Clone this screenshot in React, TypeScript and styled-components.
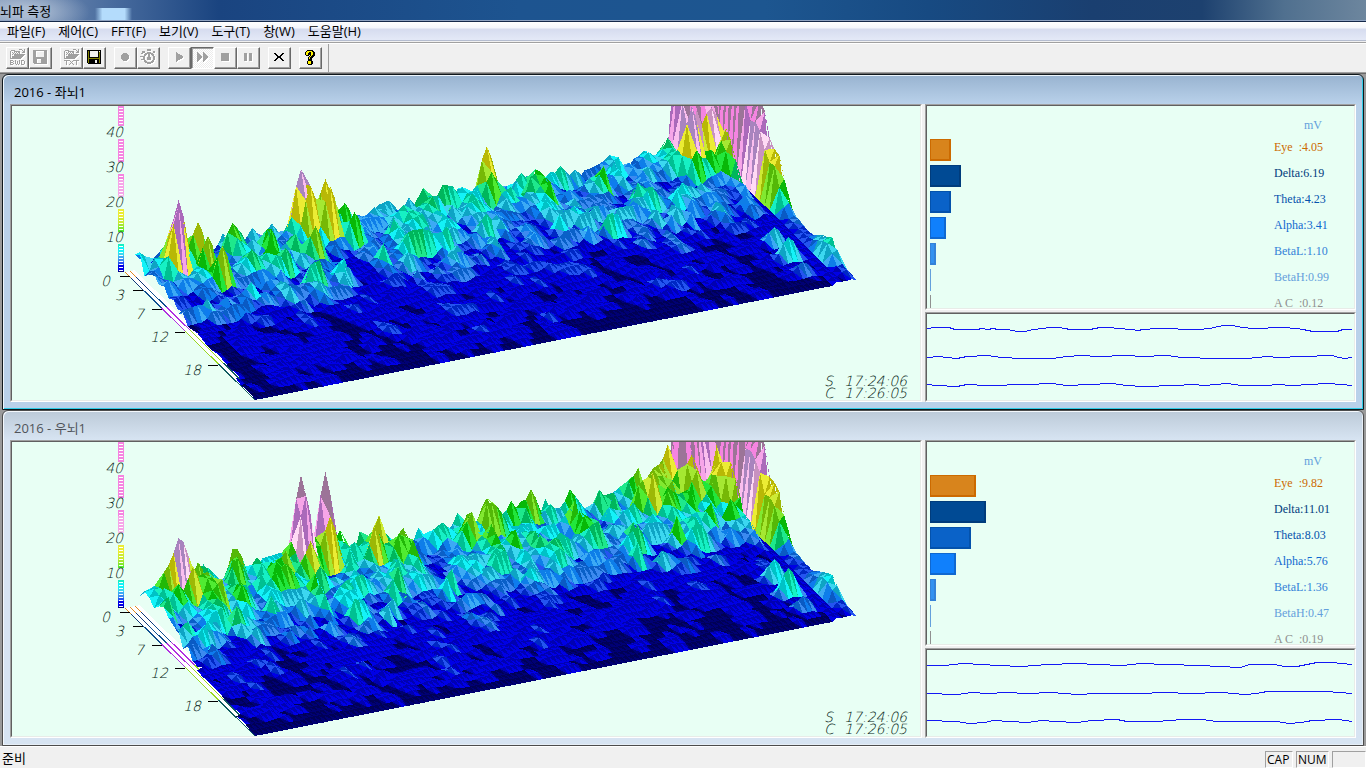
import React, { useMemo } from 'react';
import styled, { createGlobalStyle, css } from 'styled-components';

/* ---------- spectrum surface model ---------- */

type Peak = [x: number, y: number, depth: number];

interface ChannelData {
  title: string;
  active: boolean;
  seed: number;
  /* first drawn frame, by depth: [depth limit, frame] */
  start: [number, number][];
  envelope: number[];
  peaks: Peak[];
  levels: Level[];
  waves: number[][];
}

interface Level {
  name: string;
  value: string;
  width: number;
  fill: string;
  edge: string;
}

const FRAMES = 123;
const BINS = 27;
const FRAME_DX = 4.89;
const FRAME_DY = 0.966;

const floorX = (t: number, f: number) => 125 + t * FRAME_DX + 130 * f;
const floorY = (t: number, f: number) => 272 - t * FRAME_DY + 128 * f;

const lerpTable = (table: number[][], v: number) => {
  if (v <= table[0][0]) return table[0][1];
  for (let i = 1; i < table.length; i++) {
    if (v <= table[i][0]) {
      const [a, ha] = table[i - 1];
      const [b, hb] = table[i];
      return ha + ((hb - ha) * (v - a)) / (b - a);
    }
  }
  return table[table.length - 1][1];
};

const hash = (x: number, y: number, seed: number) => {
  let h = (x * 374761393 + y * 668265263 + seed * 1442695041) | 0;
  h = Math.imul(h ^ (h >>> 13), 1274126177);
  h = Math.imul(h ^ (h >>> 15), 2246822519);
  return ((h ^ (h >>> 16)) >>> 0) / 4294967296;
};

const noise = (x: number, y: number, seed: number) => {
  const ix = Math.floor(x);
  const iy = Math.floor(y);
  const s = (v: number) => v * v * (3 - 2 * v);
  const u = s(x - ix);
  const v = s(y - iy);
  const top = hash(ix, iy, seed) * (1 - u) + hash(ix + 1, iy, seed) * u;
  const low = hash(ix, iy + 1, seed) * (1 - u) + hash(ix + 1, iy + 1, seed) * u;
  return top * (1 - v) + low * v;
};

const WALL = [
  [0, 150], [0.18, 150], [0.22, 98], [0.32, 92], [0.34, 84], [0.37, 62], [0.4, 58], [0.43, 60], [0.46, 52],
  [0.49, 32], [0.53, 12], [0.57, 8], [0.6, 12], [0.65, 6], [0.68, 12], [0.71, 9],
  [0.76, 17], [0.86, 26], [0.89, 18], [0.92, 9], [0.96, 8], [1, 3],
];

const LIT = [
  [0, 0, 116], [0, 0, 230], [36, 84, 240], [60, 138, 240], [14, 124, 238], [60, 170, 245], [60, 215, 240],
  [20, 242, 248], [22, 240, 196], [30, 232, 140], [34, 230, 60], [80, 235, 50],
  [130, 232, 48], [165, 232, 50], [205, 235, 52], [235, 236, 52], [255, 218, 244],
  [250, 190, 238], [246, 165, 232], [245, 132, 224],
];
const DARK = [
  [0, 0, 86], [0, 0, 178], [0, 40, 196], [10, 96, 200], [10, 90, 196], [14, 126, 232], [14, 164, 196],
  [0, 194, 198], [0, 192, 146], [0, 182, 92], [8, 184, 8], [34, 184, 8],
  [84, 184, 8], [118, 184, 6], [156, 184, 6], [184, 184, 6], [200, 146, 192],
  [168, 132, 190], [170, 106, 186], [156, 116, 152],
];
const STEPS = [2.5, 7.4, 10.5, 13, 15, 18, 21.5, 25.5, 30, 34, 38, 42, 46, 50, 56, 63, 70, 78, 92];
const band = (h: number) => {
  let i = 0;
  while (i < STEPS.length && h > STEPS[i]) i++;
  return i;
};

function buildSurface(ch: ChannelData) {
  const h: number[][] = [];
  const env = ch.envelope.map((v, i) => [i / 10, v]);
  for (let j = 0; j <= BINS; j++) {
    const f = j / BINS;
    const row: number[] = [];
    for (let t = 0; t <= FRAMES; t++) {
      const fine = noise(t / 2, j / 1.1, ch.seed);
      const jag = hash(t, j, ch.seed + 5);
      const coarse = noise(t / 7 - j / 20, j / 4, ch.seed + 9);
      let v = lerpTable(env, f) * (0.2 + 2.3 * fine * fine + 0.15 * jag) * (0.55 + 0.85 * coarse);
      if (t < 6) v *= 0.7;
      if (t > 104 && f > 0.2) v *= 0.8;
      if (j === BINS) v = 0;
      row.push(v);
    }
    h.push(row);
  }
  ch.peaks.forEach(([x, y, f]) => {
    const j0 = Math.round(f * BINS);
    const t0 = Math.round((x - 125 - (130 * j0) / BINS) / FRAME_DX);
    const peak = floorY(t0, j0 / BINS) - y;
    for (let j = Math.max(0, j0 - 1); j <= Math.min(BINS, j0 + 1); j++) {
      for (let t = Math.max(0, t0 - 3); t <= Math.min(FRAMES, t0 + 3); t++) {
        const along = [1, 0.78, 0.38, 0.1][Math.abs(t - t0)];
        const across = j === j0 ? 1 : 0.14;
        h[j][t] = Math.max(h[j][t], peak * along * across);
      }
    }
  });
  for (let j = 0; j <= BINS; j++) {
    const f = j / BINS;
    const w = lerpTable(WALL, f);
    if (j < 4) {
      for (let t = 112; t <= 118; t++) {
        const burst = (j === 3 ? 22 : 62) + (j === 3 ? 50 : 80) * hash(t, 3 + j, ch.seed);
        h[j][t] = Math.max(h[j][t], burst);
      }
    }
    h[j][119] = f < 0.15 ? 40 : 3.5;
    h[j][120] = 2.4;
    h[j][121] = w * 0.8 * (0.88 + 0.2 * hash(j, 2, ch.seed));
    h[j][122] = w * (0.96 + 0.08 * hash(j, 1, ch.seed));
    h[j][123] = w * 0.3;
  }

  const out: { d: string; fill: string }[] = [];
  const pt = (t: number, j: number) =>
    `${floorX(t, j / BINS).toFixed(1)} ${(floorY(t, j / BINS) - h[j][t]).toFixed(1)}`;
  for (let j = 0; j < BINS; j++) {
    const groups = new Map<string, string>();
    const add = (fill: string, d: string) => groups.set(fill, (groups.get(fill) || '') + d);
    const first = (ch.start.find(([limit]) => j / BINS < limit) || [1, 0])[1];
    for (let t = FRAMES - 1; t >= first; t--) {
      const a = h[j][t];
      const b = h[j][t + 1];
      const c = h[j + 1][t + 1];
      const e = h[j + 1][t];
      const up = (c - e > -9 ? LIT : DARK)[band(Math.max(a, c, e))];
      const down = DARK[band(Math.max(a, b, c))];
      add(`rgb(${down.join(',')})`, `M${pt(t, j)}L${pt(t + 1, j)}L${pt(t + 1, j + 1)}Z`);
      add(`rgb(${up.join(',')})`, `M${pt(t, j)}L${pt(t, j + 1)}L${pt(t + 1, j + 1)}Z`);
    }
    groups.forEach((d, fill) => out.push({ d, fill }));
  }
  return out;
}

/* ---------- channel data ---------- */

const palette = [
  ['Eye  ', '#d8841c', '#cc6a00'],
  ['Delta', '#004a94', '#003c7c'],
  ['Theta', '#0a62c8', '#0452ac'],
  ['Alpha', '#1080fc', '#1068d0'],
  ['BetaL', '#3492f0', '#3482d8'],
  ['BetaH', '#64a0dc', '#64a0dc'],
  ['A C  ', '#909090', '#909090'],
];
const makeLevels = (rows: [string, number][]): Level[] =>
  rows.map(([value, width], i) => ({
    name: palette[i][0], value, width, fill: palette[i][1], edge: palette[i][2],
  }));

const channels: ChannelData[] = [
  {
    title: '2016 - 좌뇌1',
    active: true,
    seed: 17,
    start: [[0.35, 2], [0.85, 1]],
    envelope: [10, 15, 15, 12, 8.5, 5, 4.2, 3.7, 3, 2.3, 1.8],
    peaks: [
      [140, 252, 0.03], [180, 200, 0.1], [178, 206, 0.15], [199, 222, 0.12], [209, 236, 0.18], [231, 223, 0.06],
      [222, 246, 0.26], [235, 228, 0.08], [270, 238, 0.02], [302, 169, 0.04], [309, 186, 0.08], [324, 179, 0.05],
      [330, 186, 0.1], [344, 203, 0.08], [355, 212, 0.14], [314, 226, 0.22], [288, 248, 0.25], [170, 280, 0.24],
      [372, 207, 0.03], [385, 238, 0.16], [398, 211, 0.04], [424, 205, 0.02], [432, 213, 0.14], [450, 195, 0.02],
      [462, 187, 0.05], [470, 191, 0.04], [485, 146, 0.03], [491, 172, 0.08], [504, 186, 0.02], [521, 173, 0.02],
      [528, 178, 0.05], [515, 212, 0.2], [484, 214, 0.26], [550, 172, 0.04], [561, 166, 0.05], [573, 170, 0.04],
      [571, 190, 0.14], [610, 155, 0.01], [612, 160, 0.04], [630, 163, 0.03], [660, 162, 0.02], [580, 200, 0.2],
      [668, 142, 0.03], [674, 148, 0.07], [690, 106, 0.13], [696, 150, 0.19], [711, 108, 0.12], [713, 150, 0.2],
      [719, 140, 0.16], [727, 128, 0.2], [733, 140, 0.23], [740, 150, 0.27], [748, 180, 0.34], [703, 183, 0.28],
      [755, 205, 0.46], [773, 227, 0.68], [790, 237, 0.78], [805, 262, 0.9], [759, 240, 0.64],
    ],
    levels: makeLevels([['4.05', 21], ['6.19', 31], ['4.23', 21], ['3.41', 16], ['1.10', 6], ['0.99', 1], ['0.12', 1]]),
    waves: [
      [0,13,8,12,22,12,28,14,50,14,55,13,61,14,66,13,71,14,81,14,90,16,98,16,106,14,116,13,123,12,132,12,138,13,143,14,163,14,173,12,183,12,190,13,205,14,211,15,216,14,230,13,271,14,283,13,291,11,298,10,306,10,315,12,326,13,356,12,370,13,376,14,386,16,410,16,416,14,425,14],
      [0,42,12,41,20,42,30,43,40,41,60,40,75,42,95,43,125,43,140,41,155,40,170,41,200,40,215,41,240,40,255,42,290,43,320,43,340,41,352,42,375,41,405,40,412,42,418,43,425,42],
      [0,69,10,70,30,71,40,69,60,70,100,69,125,68,140,70,185,68,200,70,215,71,250,70,265,69,278,70,300,68,315,70,340,70,350,69,365,70,400,68,415,69,425,70],
    ],
  },
  {
    title: '2016 - 우뇌1',
    active: false,
    seed: 42,
    start: [[0.3, 3], [0.5, 2], [0.85, 1]],
    envelope: [15, 20, 20, 15, 9, 5, 4, 3.5, 2.8, 2.2, 1.7],
    peaks: [
      [132, 257, 0.01], [155, 250, 0.04], [166, 252, 0.1], [180, 202, 0.06], [184, 206, 0.08], [180, 248, 0.16],
      [198, 226, 0.09], [208, 236, 0.15], [195, 230, 0.14], [238, 213, 0.04], [236, 221, 0.08], [256, 221, 0.04],
      [270, 226, 0.06], [219, 254, 0.2], [301, 139, 0.04], [305, 160, 0.08], [324, 136, 0.04], [331, 180, 0.07],
      [311, 205, 0.13], [320, 230, 0.2], [345, 206, 0.03], [355, 206, 0.04], [365, 208, 0.03], [384, 195, 0.03],
      [397, 200, 0.04], [372, 227, 0.14], [401, 212, 0.1], [424, 201, 0.04], [446, 202, 0.08], [459, 212, 0.14],
      [468, 186, 0.04], [489, 162, 0.04], [482, 178, 0.05], [496, 204, 0.16], [510, 165, 0.04], [530, 153, 0.05],
      [523, 165, 0.04], [519, 200, 0.16], [552, 168, 0.04], [565, 165, 0.05], [575, 183, 0.12], [600, 164, 0.02],
      [622, 161, 0.02], [633, 161, 0.04], [640, 155, 0.02], [655, 161, 0.04], [670, 108, 0.03], [675, 134, 0.08],
      [696, 134, 0.13], [700, 165, 0.2], [711, 150, 0.18], [715, 126, 0.16], [720, 126, 0.17], [731, 126, 0.21],
      [740, 128, 0.25], [745, 150, 0.28], [754, 194, 0.4], [773, 223, 0.66], [790, 232, 0.76], [805, 260, 0.88],
    ],
    levels: makeLevels([['9.82', 46], ['11.01', 56], ['8.03', 41], ['5.76', 26], ['1.36', 6], ['0.47', 1], ['0.19', 1]]),
    waves: [
      [0,14,18,14,36,12,55,13,70,14,95,15,120,13,150,12,170,13,196,14,214,12,240,13,273,14,313,16,323,13,347,13,358,15,370,15,390,11,405,11,425,13],
      [0,42,30,43,45,41,60,42,80,41,100,42,125,41,150,43,170,42,210,42,240,41,262,42,295,41,318,43,330,42,340,40,400,40,412,41,425,42],
      [0,69,30,70,42,72,58,71,66,69,100,71,115,69,128,70,150,71,165,69,190,68,200,70,230,70,255,68,275,68,290,70,350,70,362,72,375,71,385,69,412,68,425,70],
    ],
  },
];

/* ---------- styles ---------- */

const GlobalStyle = createGlobalStyle`
  *, *::before, *::after { box-sizing: border-box; }
  body {
    margin: 0;
    background: #f0f0f0;
    color: #000;
    font: 13px/16px "Open Sans", "Noto Sans CJK KR", sans-serif;
  }
  button { font: inherit; color: inherit; }
`;

const Frame = styled.div`
  display: flex;
  flex-direction: column;
  height: 100vh;
  min-height: 560px;
`;

const TitleBar = styled.header`
  flex: none;
  height: 22px;
  padding: 3px 0 0;
  border-bottom: 1px solid #15294a;
  box-shadow: inset 0 -1px #8fa3c2;
  background:
    linear-gradient(90deg, rgba(180, 220, 252, 0), #b4dcfc 20% 80%, rgba(180, 220, 252, 0)) 95px 8px / 37px 13px no-repeat,
    radial-gradient(ellipse 64px 24px at 26px 12px, rgba(190, 204, 222, 0.75) 20%, rgba(120, 146, 184, 0) 100%),
    linear-gradient(90deg, #7f95b6 0, #4a6d9f 8%, #1a4480 16%, #1d5490 38%, #1d5690 56%, #174a82 68%, #1a3f70 80%, #1d416f 88%, #50708f 94%, #6d869e 100%);
`;

const AppTitle = styled.h1`
  margin: 0;
  font-size: 13px;
  line-height: 16px;
  font-weight: 400;
`;

const MenuBar = styled.nav`
  display: flex;
  flex: none;
  gap: 13px;
  height: 21px;
  padding: 0 7px 2px;
  border-bottom: 1px solid #a0a0a0;
  background: linear-gradient(#fff 0, #f4f6fc 6px, #d6dcef 7px, #e4e9f7 18px, #b4bccf 18px, #b4bccf 19px, #f0f0f0 19px);
`;

const MenuItem = styled.button`
  padding: 0;
  border: 0;
  background: none;
  line-height: 18px;
`;

const ToolBar = styled.div`
  display: flex;
  flex: none;
  height: 29px;
  border-top: 1px solid #fff;
`;

const ToolStrip = styled.div`
  display: flex;
  gap: 8px;
  padding: 3px 6px 0;
  border-right: 1px solid #a0a0a0;
`;

const ToolGroup = styled.div`
  display: flex;
`;

const ToolButton = styled.button<{ $pressed?: boolean }>`
  display: flex;
  align-items: center;
  justify-content: center;
  width: 23px;
  height: 22px;
  padding: 0 2px 2px 0;
  border: 1px solid;
  ${({ $pressed }) =>
    $pressed
      ? css`
          border-color: #696969 #fff #fff #696969;
          background: repeating-conic-gradient(#fff 0 25%, #ececec 0 50%) 0 0 / 2px 2px;
          box-shadow: inset 1px 1px #a0a0a0;
        `
      : css`
          border-color: #fff #696969 #696969 #fff;
          background: #f0f0f0;
          box-shadow: inset -1px -1px #a0a0a0;
        `}
`;

const Workspace = styled.main`
  flex: 1;
  display: grid;
  grid-template-rows: repeat(2, minmax(0, 1fr));
  min-height: 0;
  padding: 1px 2px 0;
  border-top: 1px solid #a0a0a0;
  box-shadow: inset 0 1px #696969;
  background: #9a9a9a;
`;

const ChildWindow = styled.section<{ $active: boolean }>`
  display: flex;
  flex-direction: column;
  min-height: 0;
  padding: 0 7px 7px;
  border: 1px solid ${({ $active }) => ($active ? '#10181c' : '#4c4c4c')};
  border-radius: 6px 6px 0 0;
  background: ${({ $active }) =>
    $active ? 'linear-gradient(#98b3d0 0, #b9d1ea 29px)' : 'linear-gradient(#bccad8 0, #d7e4f2 29px)'};
  box-shadow: ${({ $active }) =>
    $active ? 'inset 1px 1px #eef6fc, inset -1px -1px #30cce8' : 'inset 1px 1px #f4f8fc, inset -1px -1px #e6eef6'};
`;

const ChildTitle = styled.h2<{ $active: boolean }>`
  flex: none;
  height: 29px;
  margin: 0;
  padding: 9px 4px 0;
  font-size: 13px;
  line-height: 16px;
  font-weight: 400;
  color: ${({ $active }) => ($active ? '#000' : '#50545a')};
`;

const Panes = styled.div`
  flex: 1;
  display: grid;
  grid-template-columns: minmax(0, 1fr) 431px;
  grid-template-rows: minmax(0, 1fr);
  gap: 3px;
  min-height: 0;
  background: #f0f0f0;
`;

const SidePanes = styled.div`
  display: grid;
  grid-template-rows: minmax(0, 1fr) 90px;
  gap: 2px;
  min-height: 0;
`;

const Sunken = styled.div`
  display: flex;
  min-height: 0;
  border: 1px solid;
  border-color: #a0a0a0 #fff #fff #a0a0a0;
`;

const Well = styled.div`
  flex: 1;
  min-width: 0;
  min-height: 0;
  overflow: hidden;
  border: 1px solid;
  border-color: #606060 #e8ece8 #e8ece8 #606060;
  background: #e8fff4;
`;

const ChartSvg = styled.svg`
  display: block;
  width: 100%;
  height: 100%;
`;

const AxisText = styled.text`
  font: italic 200 14px "DejaVu Sans Light", "DejaVu Sans", sans-serif;
  fill: #001810;
`;

const LevelPane = styled.div`
  height: 100%;
  padding-left: 3px;
  font: 12px/16px "Liberation Serif", serif;
`;

const LevelHead = styled.div`
  height: 33px;
  padding: 11px 32px 0 0;
  text-align: right;
  color: #64a0dc;
`;

const LevelList = styled.ul`
  margin: 0;
  padding: 0;
  list-style: none;
`;

const LevelRow = styled.li`
  display: flex;
  justify-content: space-between;
  height: 26px;
`;

const LevelBar = styled.span<{ $fill: string; $edge: string }>`
  height: 22px;
  background: ${({ $fill }) => $fill};
  box-shadow: inset -2px -2px ${({ $edge }) => $edge}, inset 1px 1px ${({ $edge }) => $edge};
`;

const LevelLabel = styled.span<{ $color: string }>`
  width: 80px;
  white-space: pre;
  color: ${({ $color }) => $color};
`;

const StatusBar = styled.footer`
  display: flex;
  flex: none;
  align-items: center;
  justify-content: space-between;
  height: 22px;
  padding-left: 2px;
  border-top: 1px solid #fff;
`;

const StatusCells = styled.div`
  display: flex;
  gap: 3px;
  padding-top: 3px;
`;

const StatusCell = styled.span<{ $width: number }>`
  width: ${({ $width }) => $width}px;
  height: 17px;
  padding-left: 1px;
  font-size: 12px;
  line-height: 16px;
  border: 1px solid;
  border-color: #a0a0a0 #fff #fff #a0a0a0;
`;

/* ---------- icons ---------- */

type IconName =
  | 'openBwd' | 'saveOff' | 'openTxt' | 'save' | 'record' | 'timer'
  | 'play' | 'fast' | 'stop' | 'pause' | 'close' | 'help';

const folder = (
  <>
    <path d="M1 2h1V1h4v1h5v3h-1V3H5V2H2v7h1v1H1z" fill="currentColor" />
    <path d="M3 3h1v1H3zM5 3h1v1H5zM7 3h1v1H7zM4 4h1v1H4zM6 4h1v1H6zM8 4h1v1H8zM3 5h1v1H3zM9 3h1v1H9zM3 7h1v1H3z" fill="currentColor" />
    <path d="M5 5h11v1h-1v1h-1v1h-1v1h-1v1H2V9h1V8h1V7h1z" fill="currentColor" />
    <path d="M10 0h3v1h1v1h1V0h1v4h-3V3h1V2h-1V1h-3z" fill="currentColor" />
  </>
);

const GLYPHS: Record<string, React.ReactNode> = {
  openBwd: (
    <>
      {folder}
      <path d="M1 11h3v1h1v1H4v1h1v1H4v1H1zM2 12v1h2v-1zM2 14v1h2v-1zM6 11h1v4h1v-3h1v3h1v-4h1v4h-1v1H9v-1H8v1H7v-1H6zM12 11h3v1h1v3h-1v1h-3zM13 12v3h2v-3z" fill="currentColor" fillRule="evenodd" />
    </>
  ),
  openTxt: (
    <>
      {folder}
      <path d="M1 11h5v1H4v4H3v-4H1zM6 11h1v1h1v1h1v-1h1v-1h1v1h-1v1H9v1h1v1h1v1h-1v-1H9v-1H8v1H7v1H6v-1h1v-1h1v-1H7v-1H6zM11 11h5v1h-2v4h-1v-4h-2z" fill="currentColor" />
    </>
  ),
  saveOff: <path d="M1 1h14v14H2l-1-1zM4 2v6h8V2zM5 10v4h4v-4z" fill="currentColor" fillRule="evenodd" />,
  record: <path d="M6 4h4v1h1v1h1v4h-1v1h-1v1H6v-1H5v-1H4V6h1V5h1z" fill="currentColor" />,
  timer: (
    <>
      <path d="M7 0h4v2H7zM2 2h3v2H3v1H1V4h1zM13 2h2v2h-2zM0 7h3v1H0zM1 10h2v1H1z" fill="currentColor" />
      <circle cx="9" cy="9" r="5" fill="none" stroke="currentColor" strokeWidth="2" />
      <path d="M8 5h2v4H8zM7 8h4v3H7z" fill="currentColor" />
    </>
  ),
  play: <path d="M5 3l8 5-8 5z" fill="currentColor" />,
  fast: <path d="M3 3l5 5-5 5zM9 3l5 5-5 5z" fill="currentColor" />,
  stop: <path d="M4 4h8v8H4z" fill="currentColor" />,
  pause: <path d="M4 4h3v8H4zM9 4h3v8H9z" fill="currentColor" />,
};

function Icon({ name }: { name: IconName }) {
  const box = { width: 16, height: 16, viewBox: '0 0 16 16', shapeRendering: 'crispEdges' as const };
  if (name === 'save') {
    return (
      <svg {...box}>
        <path d="M1 1h14v14H2l-1-1z" />
        <path d="M2 2h1v12H2zM13 3h1v11h-1zM3 9h10v1H3z" fill="#808000" />
        <path d="M4 2h8v6H4z" fill="#f0f0f0" />
        <path d="M9 11h2v3H9zM13 2h1v1h-1z" fill="#f0f0f0" />
      </svg>
    );
  }
  if (name === 'close') {
    return (
      <svg {...box}>
        <path d="M3 4h2v1h1v1h1v1h2V6h1V5h1V4h2v1h-1v1h-1v1h-1v2h1v1h1v1h1v1h-2v-1h-1v-1H9V9H7v1H6v1H5v1H3v-1h1v-1h1V9h1V7H5V6H4V5H3z" />
      </svg>
    );
  }
  if (name === 'help') {
    return (
      <svg {...box}>
        <path d="M5 1h6v1h1v1h1v4h-1v1h-1v1h-1v2H6V8h1V7h1V6H7v1H4V6H3V3h1V2h1zM6 11h4v1h1v3h-1v1H6v-1H5v-3h1z" />
        <path d="M5 2h5v1H7v1H6v2H4V3h1zM9 3h2v3h-1v1H9v1H8v2H7V8h1V7h1zM6 12h3v3H6z" fill="#fff200" />
      </svg>
    );
  }
  return (
    <svg {...box} overflow="visible">
      <g transform="translate(1 1)" color="#fff">{GLYPHS[name]}</g>
      <g color="#a0a0a0">{GLYPHS[name]}</g>
    </svg>
  );
}

const toolGroups: { icon: IconName; label: string; pressed?: boolean }[][] = [
  [{ icon: 'openBwd', label: 'BWD 열기' }, { icon: 'saveOff', label: 'BWD 저장' }],
  [{ icon: 'openTxt', label: 'TXT 열기' }, { icon: 'save', label: 'TXT 저장' }],
  [{ icon: 'record', label: '기록' }, { icon: 'timer', label: '타이머' }],
  [
    { icon: 'play', label: '재생' }, { icon: 'fast', label: '빨리', pressed: true },
    { icon: 'stop', label: '정지' }, { icon: 'pause', label: '일시정지' },
  ],
  [{ icon: 'close', label: '닫기' }],
  [{ icon: 'help', label: '도움말' }],
];

/* ---------- chart parts ---------- */

const scaleSegments = [[106, 126], [139, 162], [174, 197], [209, 232], [244, 272]];
const scaleColor = (y: number) => {
  const c = LIT[band(272 - y)];
  return `rgb(${c.join(',')})`;
};

function ColorScale() {
  const rows: React.ReactNode[] = [];
  scaleSegments.forEach(([from, to]) => {
    for (let y = from; y < to; y += 3) {
      const height = Math.min(3, to - y);
      rows.push(<rect key={y} x={118} y={y} width={6} height={height} fill={scaleColor(y)} />);
      if (height === 3) rows.push(<rect key={`w${y}`} x={119} y={y + 2} width={4} height={1} fill="#fff" />);
    }
  });
  return <g>{rows}</g>;
}

const binColors: [number, number, string][] = [
  [0, 0.05, '#e08a20'], [0.05, 0.14, '#103878'], [0.14, 0.28, '#105090'],
  [0.28, 0.46, '#b030e0'], [0.46, 0.72, '#98d820'], [0.72, 1, '#105c60'],
];
const ticks: [number, number][] = [[120, 276], [133, 290], [152, 309], [175, 332], [208, 365]];
const depthLabels: [number, number, string][] = [
  [101, 286, '0'], [115, 300, '3'], [135, 319, '7'], [150, 342, '12'], [183, 375, '18'],
];
const heightLabels: [number, string][] = [[137, '40'], [172, '30'], [207, '20'], [242, '10']];

function FrameLine({ frame }: { frame: number }) {
  return (
    <>
      {binColors.map(([a, b, color]) => (
        <line
          key={color}
          x1={floorX(frame, a)} y1={floorY(frame, a)} x2={floorX(frame, b)} y2={floorY(frame, b)}
          stroke={color}
        />
      ))}
    </>
  );
}

function SurfaceChart({ channel }: { channel: ChannelData }) {
  const faces = useMemo(() => buildSurface(channel), [channel]);
  const n = channel.start[0][1];
  return (
    <ChartSvg viewBox="12 106 908 294" preserveAspectRatio="xMinYMin meet" role="img" aria-label={channel.title}>
      <g shapeRendering="crispEdges">
        <ColorScale />
        <path
          d={`M125 272L${floorX(n, 0)} ${floorY(n, 0)}L${floorX(n, 0.9)} ${floorY(n, 0.9)}L255 400Z`}
          fill="#fff"
        />
        {Array.from({ length: n - 1 }, (_, k) => <FrameLine key={k} frame={k + 1} />)}
        {faces.map((face, i) => (
          <path key={i} d={face.d} fill={face.fill} />
        ))}
        <FrameLine frame={0} />
        {ticks.map(([x, y]) => (
          <rect key={y} x={x} y={y} width={10} height={1} />
        ))}
      </g>
      {heightLabels.map(([y, label]) => (
        <AxisText key={label} x={123} y={y} textAnchor="end">{label}</AxisText>
      ))}
      {depthLabels.map(([x, y, label]) => (
        <AxisText key={label} x={x} y={y}>{label}</AxisText>
      ))}
      <AxisText x={824} y={386}>S</AxisText>
      <AxisText x={907} y={386} textAnchor="end">17:24:06</AxisText>
      <AxisText x={824} y={398}>C</AxisText>
      <AxisText x={907} y={398} textAnchor="end">17:26:05</AxisText>
    </ChartSvg>
  );
}

function WaveChart({ waves }: { waves: number[][] }) {
  return (
    <ChartSvg viewBox="0 0 427 86" preserveAspectRatio="none" shapeRendering="crispEdges" role="img" aria-label="파형">
      {waves.map((points, i) => (
        <polyline key={i} points={points.join(' ')} transform="translate(0 1.5)" fill="none" stroke="#1418f4" />
      ))}
    </ChartSvg>
  );
}

function Levels({ levels }: { levels: Level[] }) {
  return (
    <LevelPane>
      <LevelHead>mV</LevelHead>
      <LevelList>
        {levels.map((level) => (
          <LevelRow key={level.name}>
            <LevelBar $fill={level.fill} $edge={level.edge} style={{ width: level.width }} />
            <LevelLabel $color={level.edge}>{`${level.name}:${level.value}`}</LevelLabel>
          </LevelRow>
        ))}
      </LevelList>
    </LevelPane>
  );
}

function ChannelWindow({ channel }: { channel: ChannelData }) {
  return (
    <ChildWindow $active={channel.active}>
      <ChildTitle $active={channel.active}>{channel.title}</ChildTitle>
      <Panes>
        <Sunken><Well><SurfaceChart channel={channel} /></Well></Sunken>
        <SidePanes>
          <Sunken><Well><Levels levels={channel.levels} /></Well></Sunken>
          <Sunken><Well><WaveChart waves={channel.waves} /></Well></Sunken>
        </SidePanes>
      </Panes>
    </ChildWindow>
  );
}

const menus = ['파일(F)', '제어(C)', 'FFT(F)', '보기(V)', '도구(T)', '창(W)', '도움말(H)'];

export default function App() {
  return (
    <Frame>
      <GlobalStyle />
      <TitleBar><AppTitle>뇌파 측정</AppTitle></TitleBar>
      <MenuBar>
        {menus.map((label) => <MenuItem key={label}>{label}</MenuItem>)}
      </MenuBar>
      <ToolBar>
        <ToolStrip>
          {toolGroups.map((group, i) => (
            <ToolGroup key={i}>
              {group.map((tool) => (
                <ToolButton key={tool.icon} $pressed={tool.pressed} aria-label={tool.label} aria-pressed={tool.pressed}>
                  <Icon name={tool.icon} />
                </ToolButton>
              ))}
            </ToolGroup>
          ))}
        </ToolStrip>
      </ToolBar>
      <Workspace>
        {channels.map((channel) => <ChannelWindow key={channel.title} channel={channel} />)}
      </Workspace>
      <StatusBar>
        <span>준비</span>
        <StatusCells>
          <StatusCell $width={28}>CAP</StatusCell>
          <StatusCell $width={33}>NUM</StatusCell>
          <StatusCell $width={34} />
        </StatusCells>
      </StatusBar>
    </Frame>
  );
}
